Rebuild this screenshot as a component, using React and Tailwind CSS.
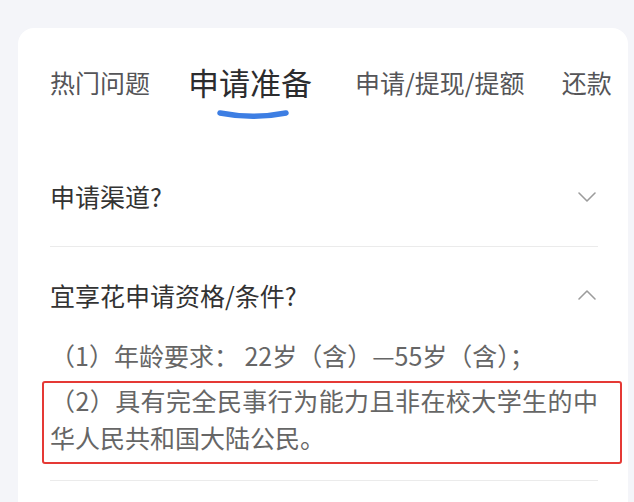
const tabs = [
  { label: '热门问题', active: false, gap: 'ml-0' },
  { label: '申请准备', active: true, gap: 'ml-[38px]' },
  { label: '申请/提现/提额', active: false, gap: 'ml-[43px]' },
  { label: '还款', active: false, gap: 'ml-[37px]' },
];

function Chevron({ up }) {
  return (
    <svg width="20" height="12" viewBox="0 0 20 12" className="mr-[1px]">
      <path
        d={up ? 'M2 10 L10 2 L18 10' : 'M2 2 L10 10 L18 2'}
        stroke="#9c9c9c"
        strokeWidth="1.6"
        fill="none"
        strokeLinecap="round"
        strokeLinejoin="round"
      />
    </svg>
  );
}

export default function App() {
  return (
    <div
      className="h-[502px] w-[634px] overflow-hidden bg-[#f4f5f9] pt-[28px] pl-[18px] pr-[6px]"
      style={{ fontFamily: '"Noto Sans CJK SC", "Noto Sans", sans-serif' }}
    >
      <div className="h-[520px] rounded-t-[16px] bg-white pl-[32px] pr-[12px]">
        {/* tab bar */}
        <div className="flex h-[74px] items-center whitespace-nowrap pt-[34px]">
          {tabs.map((t) => (
            <span
              key={t.label}
              className={
                t.active
                  ? `${t.gap} shrink-0 text-[31px] leading-[40px] text-[#2c2c2e]`
                  : `${t.gap} shrink-0 text-[25px] leading-[34px] text-[#555558]`
              }
            >
              {t.label}
            </span>
          ))}
        </div>
        <div className="h-[45px] pl-[167px] pt-[8px]">
          <svg width="72" height="10" viewBox="0 0 72 10">
            <path d="M3 3 Q36 9.5 69 3" stroke="#3d7ee3" strokeWidth="5.5" fill="none" strokeLinecap="round" />
          </svg>
        </div>

        <div className="mr-[18px]">
          {/* collapsed row */}
          <div className="flex h-[100px] items-center justify-between border-b border-[#ebebeb]">
            <span className="text-[25px] text-[#333333]">申请渠道?</span>
            <Chevron />
          </div>

          {/* expanded row */}
          <div className="border-b border-[#ebebeb] pb-[16px]">
            <div className="flex items-center justify-between pt-[31px] pb-[8px]">
              <span className="text-[25px] leading-[34px] text-[#333333]">宜享花申请资格/条件?</span>
              <Chevron up />
            </div>
            <div className="pt-[16px] text-[25px] text-[#666666]">
              <p className="leading-[38px]">（1）年龄要求： 22岁（含）—55岁（含）；</p>
              <div className="relative mt-[7px] pt-[1px] pb-[8px]">
                <p className="text-justify leading-[37px]">
                  （2）具有完全民事行为能力且非在校大学生的中华人民共和国大陆公民。
                </p>
                <div className="pointer-events-none absolute -left-[8px] -right-[24px] top-0 bottom-0 rounded-[3px] border-2 border-[#e53935]" />
              </div>
            </div>
          </div>
        </div>
      </div>
    </div>
  );
}
